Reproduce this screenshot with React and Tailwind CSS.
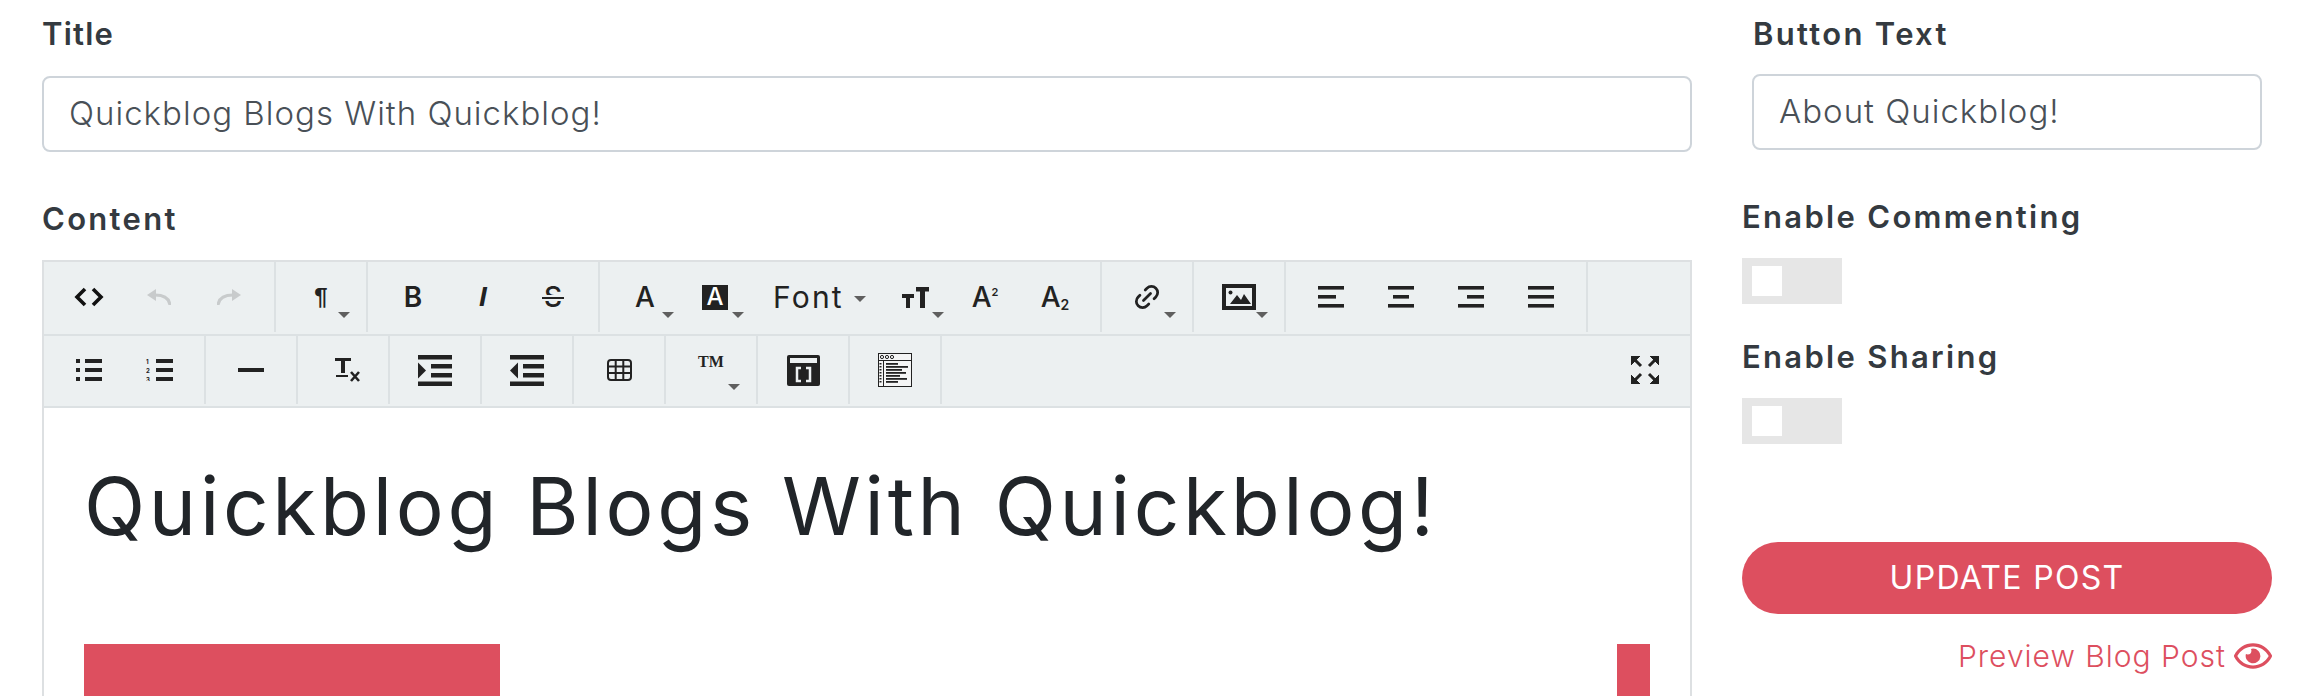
import React from "react";
import { Link2 } from "lucide-react";
import { FaRegEye } from "react-icons/fa";

const Caret = ({ className = "" }) => (
  <span className={`absolute left-[52px] w-0 h-0 border-x-[6px] border-x-transparent border-t-[6px] border-t-[#5f5f5f] ${className}`} />
);

const Btn = ({ caret, width = "w-[70px]", children }) => (
  <div className={`relative ${width} h-full flex items-center justify-center text-[#222222]`}>
    {children}
    {caret && <Caret className="top-[50px]" />}
  </div>
);

const Group = ({ children, height = "h-[70px]" }) => (
  <div className={`flex ${height} px-[10px] border-r-2 border-[#dce1e3]`}>{children}</div>
);

const Lines = ({ mid = 0, midW = 26 }) => (
  <svg width="26" height="22" fill="#222222">
    <rect width="26" height="3.6" />
    <rect x={mid} y="9" width={midW} height="3.6" />
    <rect y="18" width="26" height="3.6" />
  </svg>
);

const ListIcon = () => (
  <svg width="26" height="22" fill="#222222">
    {[0, 9, 18].map((y) => (
      <g key={y}>
        <rect y={y} width="4" height="4" />
        <rect x="9" y={y} width="17" height="4" />
      </g>
    ))}
  </svg>
);

const OlIcon = () => (
  <svg width="27" height="22" fill="#222222">
    {[0, 9, 18].map((y, i) => (
      <g key={y}>
        <text x="0" y={y + 5} fontSize="6" fontWeight="700" fontFamily="Inter, sans-serif">{i + 1}</text>
        <rect x="10" y={y} width="17" height="4" />
      </g>
    ))}
  </svg>
);

const IndentIcon = ({ flip }) => (
  <svg width="34" height="31" fill="#222222">
    <rect width="34" height="4.5" />
    <rect x="13" y="9" width="21" height="4.5" />
    <rect x="13" y="18" width="21" height="4.5" />
    <rect y="26.5" width="34" height="4.5" />
    <polygon points={flip ? "8,7.5 0,15.5 8,23.5" : "0,7.5 8,15.5 0,23.5"} />
  </svg>
);

const Undo = ({ flip }) => (
  <svg width="24" height="16" className={flip ? "-scale-x-100" : ""} fill="none">
    <polygon points="0,6 9,0 9,12" fill="#c8cbcc" />
    <path d="M8 6C16 6 22 8 23 16" stroke="#c8cbcc" strokeWidth="3" />
  </svg>
);

const ImageIcon = () => (
  <svg width="34" height="26" fill="none">
    <rect x="2" y="2" width="30" height="22" stroke="#222222" strokeWidth="4" />
    <circle cx="8.5" cy="8.5" r="2" fill="#222222" />
    <polygon points="8,20 15,11 19,16 22,10 29,20" fill="#222222" />
  </svg>
);

const Fullscreen = () => (
  <svg width="28" height="28" fill="#222222" stroke="#222222">
    <polygon points="0,0 9,0 0,9" />
    <line x1="3" y1="3" x2="10" y2="10" strokeWidth="3" />
    <polygon points="28,0 19,0 28,9" />
    <line x1="25" y1="3" x2="18" y2="10" strokeWidth="3" />
    <polygon points="0,28 9,28 0,19" />
    <line x1="3" y1="25" x2="10" y2="18" strokeWidth="3" />
    <polygon points="28,28 19,28 28,19" />
    <line x1="25" y1="25" x2="18" y2="18" strokeWidth="3" />
  </svg>
);

const TableIcon = () => (
  <svg width="25" height="22" fill="none" stroke="#222222" strokeWidth="2">
    <rect x="1" y="1" width="23" height="20" rx="3" />
    <path d="M1 7.5H24M1 14H24M8.7 1V21M16.3 1V21" />
  </svg>
);

const TemplateIcon = () => (
  <svg width="33" height="31">
    <rect width="33" height="31" rx="2" fill="#222222" />
    <rect x="3" y="3" width="27" height="5" fill="#ecf0f1" />
    <path d="M14 13H10V26H14M19 13H23V26H19" fill="none" stroke="#ecf0f1" strokeWidth="2.5" />
  </svg>
);

const CodeViewIcon = () => (
  <svg width="34" height="34" fill="#222222">
    <rect x="0.5" y="0.5" width="33" height="33" fill="#f4f5f5" stroke="#222222" />
    <rect y="7" width="34" height="1" />
    <rect x="5" y="8" width="1" height="26" />
    <circle cx="4" cy="4" r="1.6" fill="none" stroke="#222222" />
    <circle cx="9" cy="4" r="1.6" fill="none" stroke="#222222" />
    <circle cx="14" cy="4" r="1.6" fill="none" stroke="#222222" />
    {[10, 13, 16, 19, 22, 25, 28].map((y, i) => (
      <g key={y}>
        <rect x="1.5" y={y} width="2" height="1.5" />
        <rect x="8" y={y} width={[12, 22, 16, 20, 14, 21, 12][i]} height="1.8" />
      </g>
    ))}
  </svg>
);

const ClearIcon = () => (
  <svg width="25" height="24" className="ml-[8px]" fill="#222222" stroke="#222222">
    <rect width="16" height="3" stroke="none" />
    <rect x="6" width="4" height="15" stroke="none" />
    <rect x="1" y="17" width="12" height="2" stroke="none" />
    <path d="M16 14L24 23M24 14L16 23" strokeWidth="2.6" fill="none" />
  </svg>
);

const SizeIcon = () => (
  <svg width="27" height="21" fill="#222222">
    <rect x="14" width="13" height="4.5" />
    <rect x="18" width="5" height="21" />
    <rect y="7" width="12" height="4" />
    <rect x="4" y="7" width="4" height="14" />
  </svg>
);

const Letter = ({ className = "", children }) => (
  <span className={`text-[28px] leading-none ${className}`}>{children}</span>
);

const Field = ({ value, className = "" }) => (
  <input
    readOnly
    value={value}
    className={`h-[76px] border-2 border-[#ced4da] rounded-lg bg-white pl-[25px] pb-[3px] text-[33px] font-light tracking-[1px] text-[#495057] outline-none ${className}`}
  />
);

const Label = ({ className = "", tracking = "tracking-[2.3px]", children }) => (
  <div className={`h-[36px] text-[31px] leading-[36px] font-semibold text-[#343a40] ${tracking} ${className}`}>{children}</div>
);

const Toggle = ({ className = "" }) => (
  <div className={`w-[100px] h-[46px] bg-[#e6e6e6] flex items-center pl-[10px] ${className}`}>
    <div className="w-[30px] h-[30px] bg-white" />
  </div>
);

export default function App() {
  return (
    <div className="h-[696px] overflow-hidden bg-white flex pl-[42px] font-[Inter,sans-serif]">
      <div className="w-[1650px] shrink-0">
        <Label className="mt-[16px]" tracking="tracking-[1.2px]">Title</Label>
        <Field value="Quickblog Blogs With Quickblog!" className="w-full mt-[24px] block" />
        <Label className="mt-[49px]">Content</Label>

        <div className="mt-[23px] border-2 border-[#dde0e2] border-b-0">
          <div className="h-[74px] bg-[#ecf0f1] border-b-2 border-[#dce1e3] flex items-start">
            <Group>
              <Btn>
                <svg width="30" height="20" fill="none" stroke="#111111" strokeWidth="3.6">
                  <path d="M11 2L3 10L11 18M19 2L27 10L19 18" />
                </svg>
              </Btn>
              <Btn><Undo /></Btn>
              <Btn><Undo flip /></Btn>
            </Group>
            <Group>
              <Btn caret><span className="text-[24px] leading-none font-bold font-[Liberation_Sans,sans-serif]">¶</span></Btn>
            </Group>
            <Group>
              <Btn><Letter className="font-semibold">B</Letter></Btn>
              <Btn><Letter className="italic font-bold font-[Liberation_Sans,sans-serif]">I</Letter></Btn>
              <Btn>
                <Letter className="font-medium">S</Letter>
                <span className="absolute left-[24px] top-[33px] w-[22px] h-[6px] bg-[#222222] border-y-2 border-[#ecf0f1] box-border" />
              </Btn>
            </Group>
            <Group>
              <Btn caret><Letter className="font-medium">A</Letter></Btn>
              <Btn caret>
                <span className="w-[26px] h-[25px] bg-[#222222] text-white flex items-center justify-center text-[24px] leading-none font-medium">A</span>
              </Btn>
              <Btn width="w-[130px]">
                <span className="absolute left-[23px] text-[30px] leading-none tracking-[2.2px]">Font</span>
                <span className="absolute left-[104px] top-[34px] w-0 h-0 border-x-[6px] border-x-transparent border-t-[6px] border-t-[#5f5f5f]" />
              </Btn>
              <Btn caret><SizeIcon /></Btn>
              <Btn>
                <Letter className="font-medium">A</Letter>
                <span className="text-[11px] font-semibold leading-none self-start mt-[25px]">2</span>
              </Btn>
              <Btn>
                <Letter className="font-medium">A</Letter>
                <span className="text-[14px] font-semibold leading-none mt-[16px]">2</span>
              </Btn>
            </Group>
            <Group>
              <Btn caret><Link2 size={30} strokeWidth={2.2} className="-rotate-45" /></Btn>
            </Group>
            <Group>
              <Btn caret><ImageIcon /></Btn>
            </Group>
            <Group>
              <Btn><Lines midW={18} /></Btn>
              <Btn><Lines mid={5} midW={16} /></Btn>
              <Btn><Lines mid={9} midW={17} /></Btn>
              <Btn><Lines /></Btn>
            </Group>
          </div>

          <div className="h-[72px] bg-[#ecf0f1] border-b-2 border-[#dce1e3] flex items-start">
            <Group height="h-[68px]">
              <Btn><ListIcon /></Btn>
              <Btn><OlIcon /></Btn>
            </Group>
            <Group height="h-[68px]">
              <Btn><span className="w-[26px] h-[4px] bg-[#222222]" /></Btn>
            </Group>
            <Group height="h-[68px]"><Btn><ClearIcon /></Btn></Group>
            <Group height="h-[68px]"><Btn><IndentIcon /></Btn></Group>
            <Group height="h-[68px]"><Btn><IndentIcon flip /></Btn></Group>
            <Group height="h-[68px]"><Btn><TableIcon /></Btn></Group>
            <Group height="h-[68px]">
              <div className="relative w-[70px] h-full flex justify-center text-[#222222]">
                <span className="mt-[18px] text-[16px] leading-none font-bold font-[Liberation_Serif,serif]">TM</span>
                <Caret className="top-[48px]" />
              </div>
            </Group>
            <Group height="h-[68px]"><Btn><TemplateIcon /></Btn></Group>
            <Group height="h-[68px]"><Btn><CodeViewIcon /></Btn></Group>
            <div className="ml-auto pr-[10px] h-[68px]"><Btn><Fullscreen /></Btn></div>
          </div>

          <div className="bg-white px-[40px] pt-[48px]">
            <h1 className="h-[100px] text-[80px] leading-[100px] font-normal tracking-[3.7px] text-[#212529] whitespace-nowrap">
              Quickblog Blogs With Quickblog!
            </h1>
            <div className="mt-[88px] flex justify-between">
              <div className="w-[416px] h-[60px] bg-[#dd4f5f]" />
              <div className="w-[33px] h-[60px] bg-[#dd4f5f]" />
            </div>
          </div>
        </div>
      </div>

      <div className="w-[530px] ml-[50px] shrink-0">
        <Label className="mt-[16px] ml-[11px]">Button Text</Label>
        <Field value="About Quickblog!" className="w-[510px] ml-[10px] mt-[22px] block" />
        <Label className="mt-[49px]">Enable Commenting</Label>
        <Toggle className="mt-[23px]" />
        <Label className="mt-[35px]">Enable Sharing</Label>
        <Toggle className="mt-[23px]" />
        <button className="mt-[98px] w-full h-[72px] rounded-full bg-[#dd4f5f] text-white text-[32px] font-normal tracking-[1.3px]">
          UPDATE POST
        </button>
        <div className="mt-[26px] h-[32px] flex items-center justify-end gap-[8px] text-[#dd4f5f] text-[30px] font-light tracking-[1px]">
          <span className="leading-[32px]">Preview Blog Post</span>
          <FaRegEye size={38} />
        </div>
      </div>
    </div>
  );
}
